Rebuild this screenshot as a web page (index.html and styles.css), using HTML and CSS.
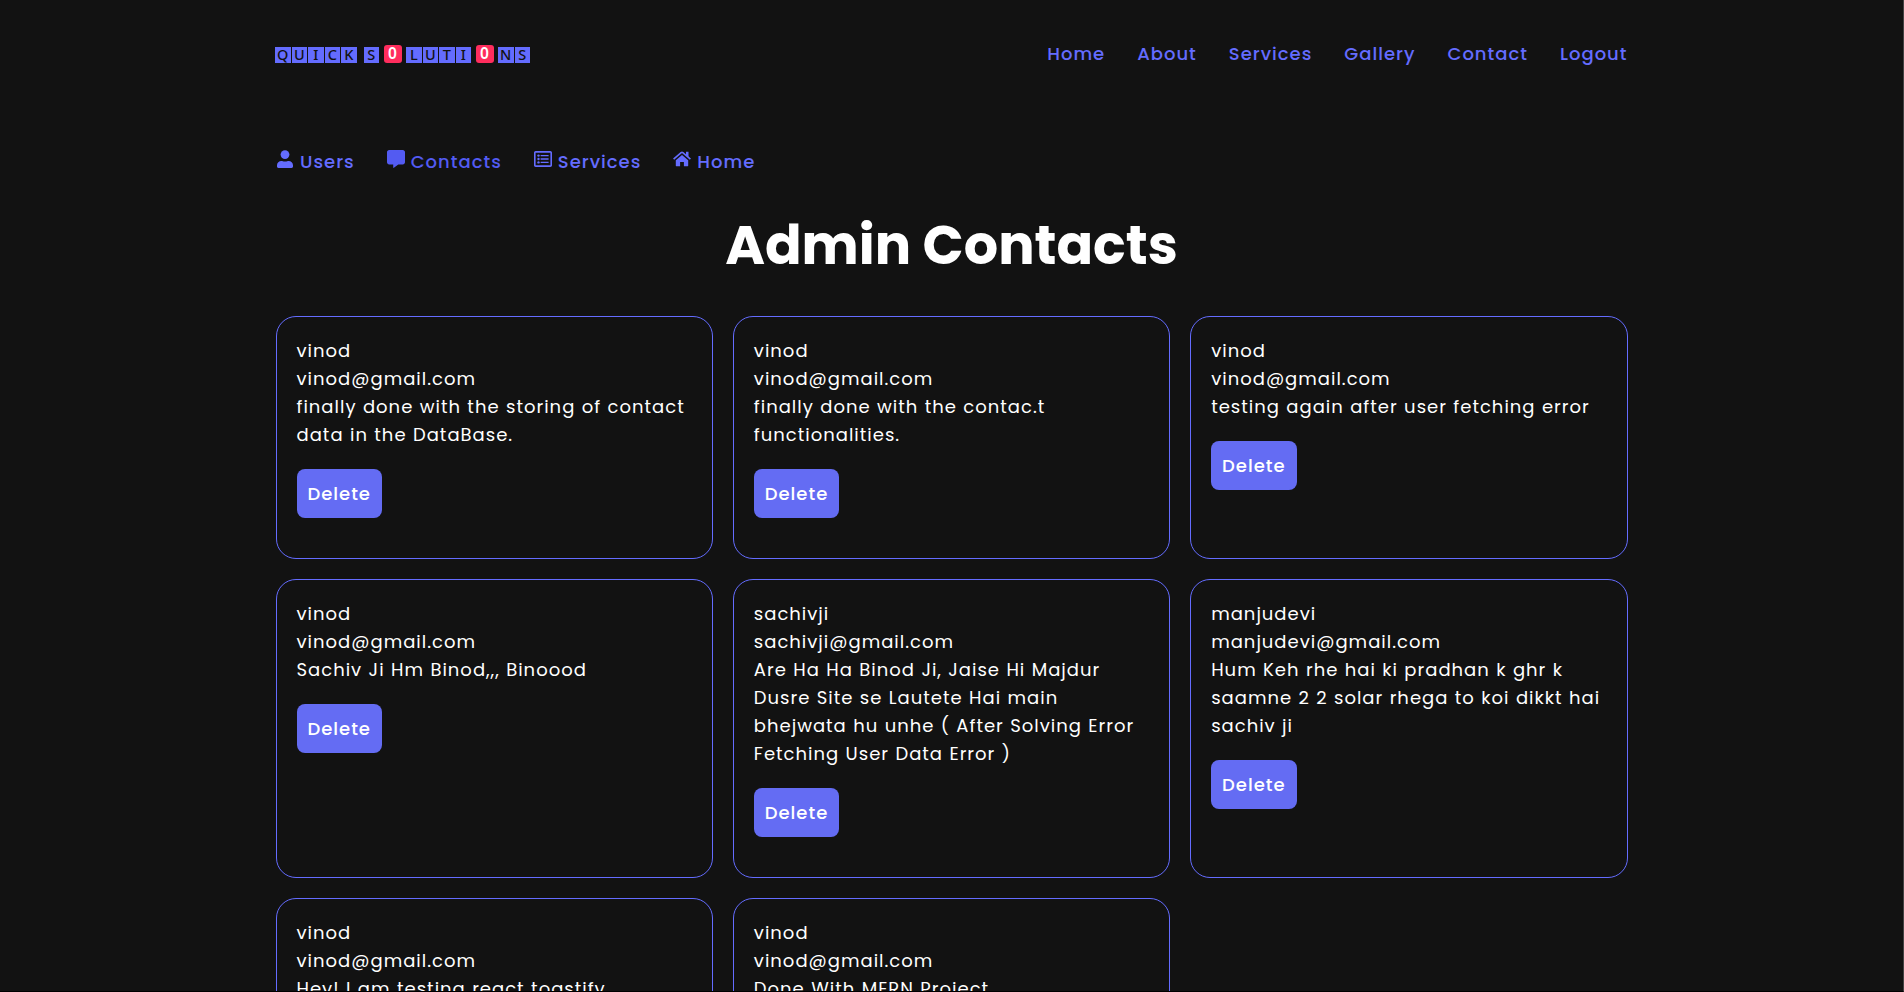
FILE: index.html
```html
<!DOCTYPE html>
<html lang="en">
<head>
<meta charset="utf-8">
<title>Admin Contacts</title>
<link rel="stylesheet" href="styles.css">
</head>
<body>
<div class="page">
  <header class="header container">
    <div class="logo">
      <span class="tile">Q</span><span class="tile">U</span><span class="tile">I</span><span class="tile">C</span><span class="tile">K</span>
      <span class="tile word">S</span><span class="zero">0</span><span class="tile">L</span><span class="tile">U</span><span class="tile">T</span><span class="tile">I</span><span class="zero">0</span><span class="tile">N</span><span class="tile">S</span>
    </div>
    <nav class="nav">
      <a>Home</a>
      <a>About</a>
      <a>Services</a>
      <a>Gallery</a>
      <a>Contact</a>
      <a>Logout</a>
    </nav>
  </header>

  <nav class="subnav container">
    <a><svg class="icon" viewBox="0 0 18 18"><circle cx="9" cy="4.6" r="4.4"/><path d="M1 16.6v-1.4c0-2.6 2-4.3 4.4-4.3.9 0 1.700.6 3.600.6s2.700-.6 3.600-.6c2.400 0 4.400 1.700 4.400 4.300v1.400c0 .8-.6 1.400-1.400 1.400H2.400C1.600 18 1 17.400 1 16.600z"/></svg>Users</a>
    <a class="active"><svg class="icon" viewBox="0 0 18 18"><path d="M2.200 0h13.600C17 0 18 1 18 2.200v10.100c0 1.200-1 2.200-2.200 2.200h-4.500l-4.400 3.300c-.3.200-.7 0-.7-.3v-3h-4C1 14.500 0 13.500 0 12.300V2.200C0 1 1 0 2.200 0z"/></svg>Contacts</a>
    <a><svg class="icon" viewBox="0 0 18 18"><path d="M1.700 1.100h14.600c.9 0 1.700.8 1.700 1.700v12.400c0 .9-.8 1.700-1.700 1.700H1.700C.8 16.900 0 16.100 0 15.200V2.800c0-.9.8-1.700 1.700-1.700zM1.600 2.700v12.600h14.800V2.700z" fill-rule="evenodd"/><circle cx="4.500" cy="5.600" r="1.200"/><circle cx="4.500" cy="9" r="1.200"/><circle cx="4.500" cy="12.400" r="1.200"/><path d="M6.600 4.900h8v1.400h-8zM6.600 8.300h8v1.400h-8zM6.600 11.700h8v1.400h-8z"/></svg>Services</a>
    <a><svg class="icon" viewBox="0 0 18 18"><path d="M9 5.100l6.200 5.100v5.500c0 .3-.2.500-.5.500h-3.800v-4.200H7.100v4.200H3.300c-.3 0-.5-.2-.5-.5v-5.500z"/><path d="M.600 9.200L8.200 2.700c.5-.4 1.100-.4 1.600 0l7.600 6.500" fill="none" stroke="currentColor" stroke-width="1.700"/><path d="M13 1.800h2.500v5.400L13 5z"/></svg>Home</a>
  </nav>

  <h1 class="title">Admin Contacts</h1>

  <main class="grid">
    <article class="card">
      <p>vinod</p>
      <p>vinod@gmail.com</p>
      <p>finally done with the storing of contact data in the DataBase.</p>
      <button class="btn">Delete</button>
    </article>
    <article class="card">
      <p>vinod</p>
      <p>vinod@gmail.com</p>
      <p>finally done with the contac.t functionalities.</p>
      <button class="btn">Delete</button>
    </article>
    <article class="card">
      <p>vinod</p>
      <p>vinod@gmail.com</p>
      <p>testing again after user fetching error</p>
      <button class="btn">Delete</button>
    </article>
    <article class="card">
      <p>vinod</p>
      <p>vinod@gmail.com</p>
      <p>Sachiv Ji Hm Binod,,, Binoood</p>
      <button class="btn">Delete</button>
    </article>
    <article class="card">
      <p>sachivji</p>
      <p>sachivji@gmail.com</p>
      <p>Are Ha Ha Binod Ji, Jaise Hi Majdur Dusre Site se Lautete Hai main bhejwata hu unhe ( After Solving Error Fetching User Data Error )</p>
      <button class="btn">Delete</button>
    </article>
    <article class="card">
      <p>manjudevi</p>
      <p>manjudevi@gmail.com</p>
      <p>Hum Keh rhe hai ki pradhan k ghr k saamne 2 2 solar rhega to koi dikkt hai sachiv ji</p>
      <button class="btn">Delete</button>
    </article>
    <article class="card">
      <p>vinod</p>
      <p>vinod@gmail.com</p>
      <p>Hey! I am testing react toastify</p>
    </article>
    <article class="card">
      <p>vinod</p>
      <p>vinod@gmail.com</p>
      <p>Done With MERN Project</p>
    </article>
  </main>
</div>
</body>
</html>
```
FILE: styles.css
```css
* { box-sizing: border-box; margin: 0; padding: 0; }

body { background: #121212; overflow: hidden; }

.page {
  height: 992px;
  overflow: hidden;
  border-right: 1px solid #444;
  border-bottom: 1px solid #000;
  background: #121212;
  color: #fff;
  font-family: Poppins, Inter, "Liberation Sans", sans-serif;
  font-size: 18px;
  line-height: 28px;
  letter-spacing: 1px;
}

.container { width: 1351.5px; margin-left: 276px; }

.header {
  display: flex;
  justify-content: space-between;
  align-items: center;
  height: 108px;
}

/* Logo */
.logo {
  display: flex;
  align-items: center;
  margin-left: -1px;
  padding-top: 2px;
  letter-spacing: 0;
}
.tile {
  width: 15.5px;
  height: 16px;
  margin-right: 1px;
  background: #646cff;
  color: #121212;
  font: 500 14.5px/14px "Noto Sans", sans-serif;
  text-align: center;
}
.word { margin-left: 6px; }
.zero {
  width: 18px;
  height: 18px;
  margin: -3px 4.5px 0 3.5px;
  border-radius: 3px;
  background: #ff2d5d;
  color: #fff;
  font: 600 15.5px/17px "Noto Sans", sans-serif;
  text-align: center;
}

/* Navigation */
.nav { display: flex; gap: 32px; }
.nav a, .subnav a { color: #646cff; font-weight: 500; }
.subnav { display: flex; gap: 32px; padding-top: 40px; }
.subnav a { display: flex; align-items: center; }
.subnav .active { color: #535bf2; }
.icon { width: 18px; height: 18px; margin: 0 6px 6px 0; fill: currentColor; }

.title {
  margin-top: 34px;
  padding-bottom: 36px;
  font-size: 54px;
  font-weight: 700;
  line-height: 70px;
  letter-spacing: 0;
  text-align: center;
}

/* Cards */
.grid {
  display: grid;
  grid-template-columns: repeat(3, minmax(0, 1fr));
  gap: 20px;
  width: 1352px;
  margin-left: 275.5px;
}
.card {
  padding: 20px 20px 40px;
  border: 1px solid #646cff;
  border-radius: 20px;
  word-spacing: 0.6px;
}
.btn {
  display: block;
  width: 85.4px;
  height: 49px;
  margin-top: 20px;
  border: 0;
  border-radius: 8px;
  background: #646cf3;
  color: #fff;
  font: inherit;
  font-weight: 500;
  letter-spacing: 1px;
}
```
